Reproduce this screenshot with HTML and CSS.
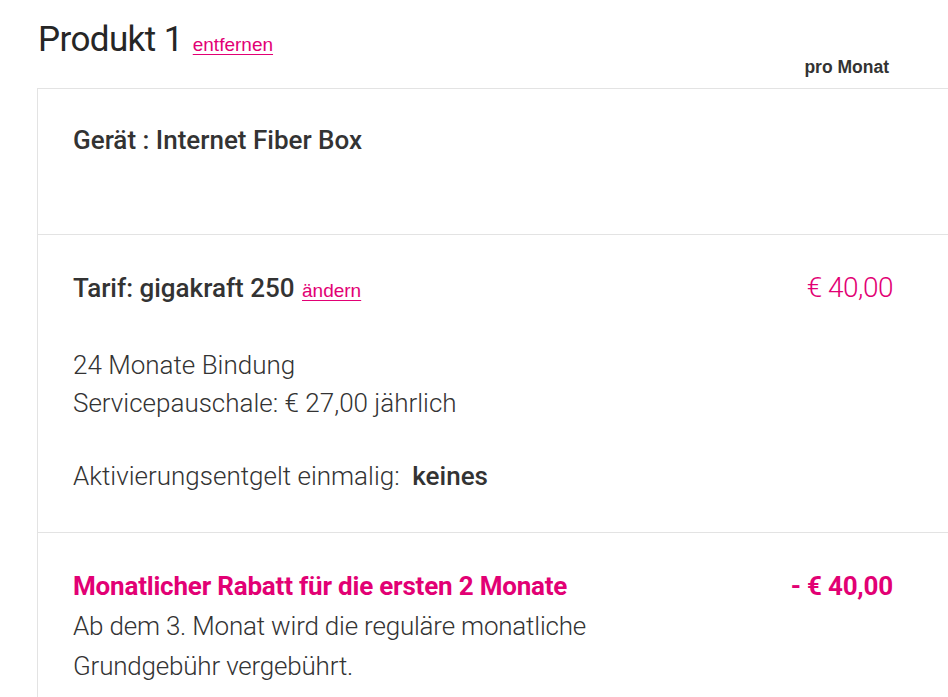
FILE: index.html
```html
<!DOCTYPE html>
<html lang="de">
<head>
<meta charset="utf-8">
<title>Produkt 1</title>
<link rel="stylesheet" href="styles.css">
</head>
<body>
<div class="page">
  <div class="head">
    <h1 class="title">Produkt 1</h1>
    <a class="link" href="#">entfernen</a>
  </div>
  <div class="per">pro Monat</div>
  <div class="box">
    <div class="row row-device">
      <div class="strong">Gerät : Internet Fiber Box</div>
    </div>
    <div class="row row-tariff">
      <div class="line">
        <div class="strong">Tarif: gigakraft 250 <a class="link" href="#">ändern</a></div>
        <div class="price">€ 40,00</div>
      </div>
      <div class="light gap-a">24 Monate Bindung<br>Servicepauschale: € 27,00 jährlich</div>
      <div class="light gap-b">Aktivierungsentgelt einmalig:&nbsp; <b class="bold">keines</b></div>
    </div>
    <div class="row row-discount">
      <div class="line">
        <div class="strong pink">Monatlicher Rabatt für die ersten 2 Monate</div>
        <div class="strong pink">- € 40,00</div>
      </div>
      <div class="light tall">Ab dem 3. Monat wird die reguläre monatliche<br>Grundgebühr vergebührt.</div>
    </div>
  </div>
</div>
</body>
</html>
```

FILE: styles.css
```css
html, body {
  margin: 0;
  padding: 0;
  overflow: hidden;
  background: #fff;
}
body {
  font-family: Roboto, "Liberation Sans", sans-serif;
  color: #333;
}
.page {
  padding: 16px 0 0 37px;
}
.head {
  display: flex;
  align-items: baseline;
  gap: 10px;
  padding-left: 1px;
}
.title {
  margin: 0;
  font-size: 35px;
  font-weight: 400;
  line-height: 48px;
  letter-spacing: -0.6px;
  color: #262626;
}
.link {
  font-family: "Liberation Sans", Arial, sans-serif;
  font-size: 19px;
  font-weight: 400;
  color: #e20074;
  text-decoration: underline;
  text-underline-offset: 3px;
  letter-spacing: 0;
}
.per {
  font-family: "Liberation Sans", Arial, sans-serif;
  font-weight: 700;
  font-size: 17.5px;
  text-align: right;
  padding-right: 59px;
  line-height: 24px;
  margin-top: -9px;
}
.box {
  margin-top: 9px;
  margin-right: -20px;
  border: 1px solid #e3e3e3;
}
.row {
  padding: 33px 74px 37px 35px;
  border-top: 1px solid #e3e3e3;
}
.row:first-child {
  border-top: 0;
}
.row-device {
  padding-top: 31px;
  padding-bottom: 74px;
}
.line {
  display: flex;
  justify-content: space-between;
  align-items: baseline;
}
.strong {
  font-size: 26px;
  font-weight: 500;
  line-height: 40px;
  letter-spacing: 0;
}
.strong .link {
  margin-left: 1px;
}
.price {
  font-size: 28px;
  font-weight: 300;
  color: #e20074;
  line-height: 40px;
  letter-spacing: -0.5px;
}
.light {
  font-size: 26px;
  font-weight: 300;
  line-height: 38px;
  letter-spacing: 0;
}
.gap-a {
  margin-top: 35px;
}
.gap-b {
  margin-top: 35px;
}
.tall {
  line-height: 40px;
  letter-spacing: -0.2px;
}
.bold {
  font-weight: 500;
}
.pink {
  color: #e20074;
  font-weight: 700;
  letter-spacing: -0.2px;
}
```
